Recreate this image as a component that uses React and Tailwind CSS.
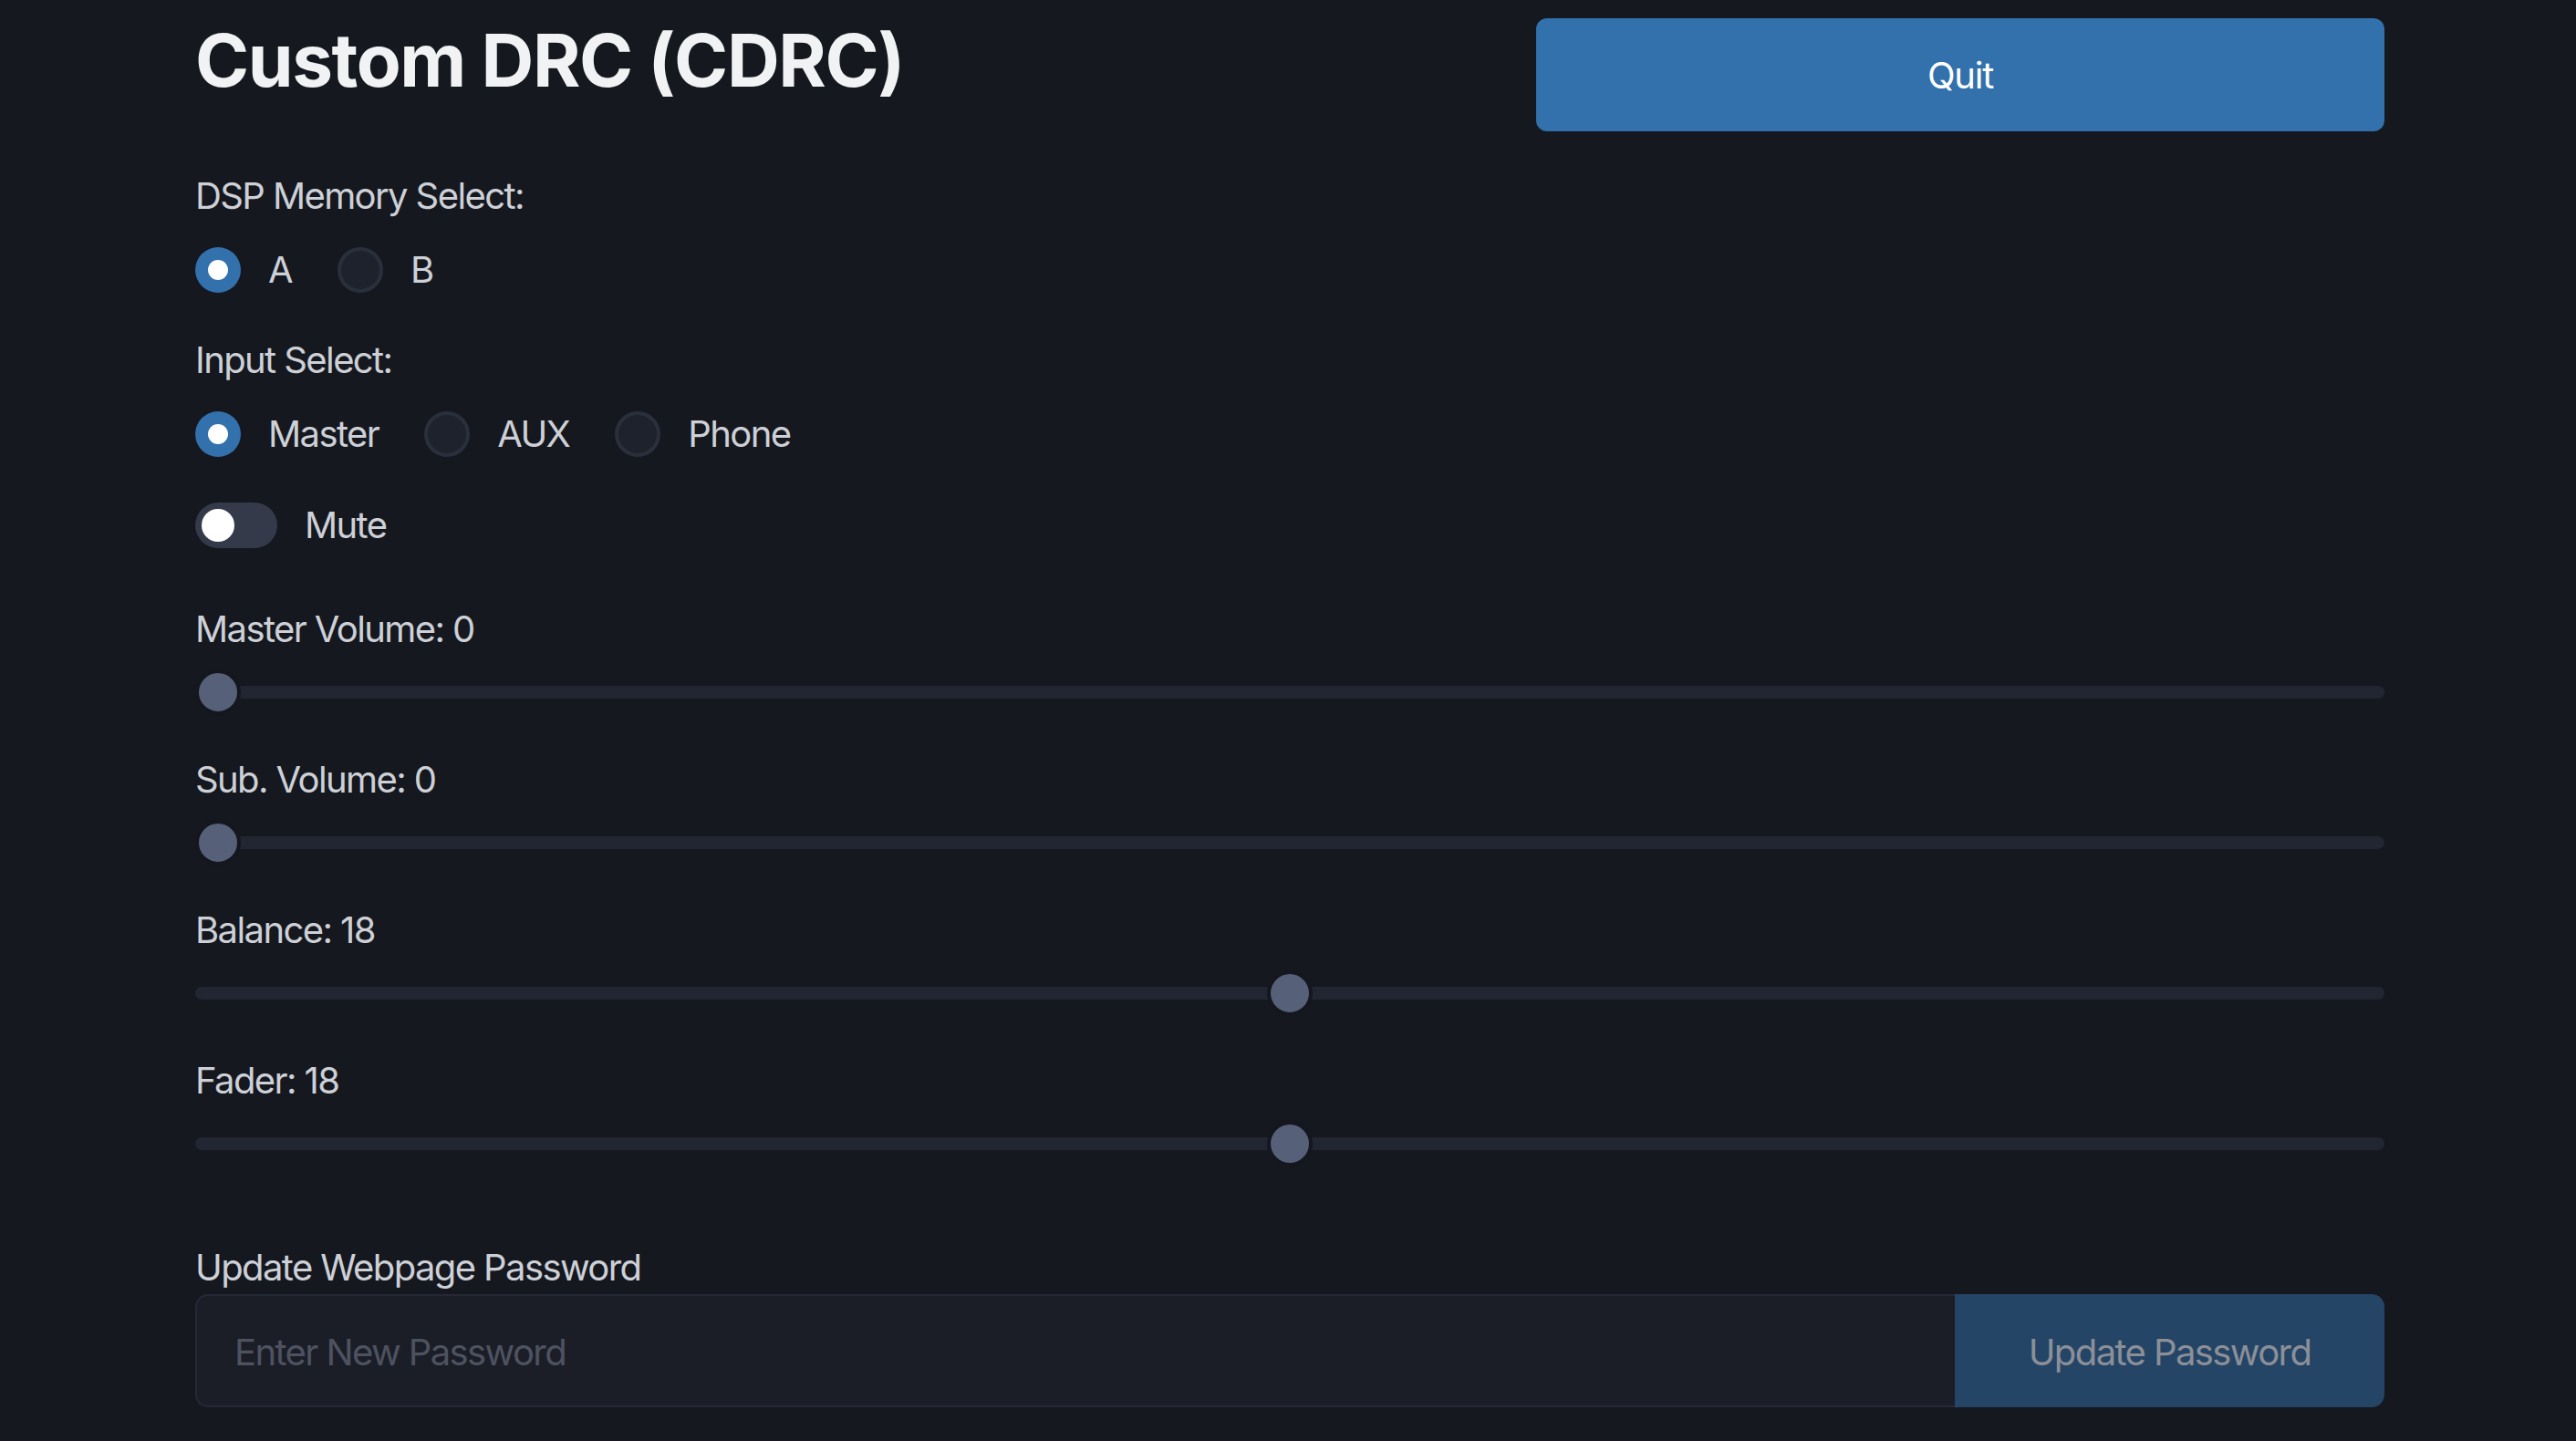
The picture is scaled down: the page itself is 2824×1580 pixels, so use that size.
import React from "react";

function Radio({ checked, label }) {
  return (
    <div className="flex items-center gap-[30px]">
      {checked ? (
        <div className="flex h-[50px] w-[50px] items-center justify-center rounded-full bg-[#3271ac]">
          <div className="h-[22px] w-[22px] rounded-full bg-white" />
        </div>
      ) : (
        <div className="h-[50px] w-[50px] rounded-full border-[4px] border-[#2a2f3c] bg-[#1e222c]" />
      )}
      <span className="text-[40px] leading-[56px] tracking-[-1.6px] text-[#cdd0d6]">{label}</span>
    </div>
  );
}

function Slider({ label, value, min, max, first }) {
  const pct = (value - min) / (max - min);
  return (
    <div className={first ? "mt-[61px]" : "mt-[43px]"}>
      <div className="h-[56px] text-[40px] leading-[56px] tracking-[-1.6px] text-[#cdd0d6]">
        {label}: {value}
      </div>
      <div className="relative mt-[16px] h-[50px] w-full">
        <div className="absolute left-0 right-0 top-[18px] h-[14px] rounded-full bg-[#222632]" />
        <div
          className="absolute top-0 h-[50px] w-[50px] rounded-full border-[4px] border-[#14171e] bg-[#576079]"
          style={{ left: `calc(${pct} * (100% - 50px))` }}
        />
      </div>
    </div>
  );
}

export default function App() {
  return (
    <div
      className="min-h-[1580px] w-full bg-[#15181f]"
      style={{ fontFamily: "Inter, 'Noto Sans', sans-serif" }}
    >
      <div className="ml-[214px] w-[2400px] pt-[20px]">
        <div className="flex items-start justify-between">
          <h1 className="text-[80px] font-bold leading-[92px] tracking-[-1.4px] text-[#f1f2f4]">
            Custom DRC (CDRC)
          </h1>
          <button className="h-[124px] w-[930px] rounded-[12px] bg-[#3271ab] pt-[2px] text-[40px] tracking-[-1.2px] text-white">
            Quit
          </button>
        </div>

        <div className="mt-[43px] h-[56px] text-[40px] leading-[56px] tracking-[-1.6px] text-[#cdd0d6]">
          DSP Memory Select:
        </div>
        <div className="mt-[28px] flex h-[50px] items-center gap-[50px]">
          <Radio checked label="A" />
          <Radio label="B" />
        </div>

        <div className="mt-[46px] h-[56px] text-[40px] leading-[56px] tracking-[-1.6px] text-[#cdd0d6]">
          Input Select:
        </div>
        <div className="mt-[28px] flex h-[50px] items-center gap-[50px]">
          <Radio checked label="Master" />
          <Radio label="AUX" />
          <Radio label="Phone" />
        </div>

        <div className="mt-[50px] flex h-[50px] items-center gap-[30px]">
          <div className="relative h-[50px] w-[90px] rounded-full bg-[#343a4a]">
            <div className="absolute left-[7px] top-[7px] h-[36px] w-[36px] rounded-full bg-white" />
          </div>
          <span className="text-[40px] leading-[56px] tracking-[-1.6px] text-[#cdd0d6]">Mute</span>
        </div>

        <Slider first label="Master Volume" value={0} min={0} max={36} />
        <Slider label="Sub. Volume" value={0} min={0} max={36} />
        <Slider label="Balance" value={18} min={0} max={36} />
        <Slider label="Fader" value={18} min={0} max={36} />

        <div className="mt-[83px] h-[56px] text-[40px] leading-[56px] tracking-[-1.6px] text-[#cdd0d6]">
          Update Webpage Password
        </div>
        <div className="mt-[1px] flex h-[124px]">
          <div className="flex flex-1 items-center rounded-l-[14px] border-[2px] border-r-0 border-[#252935] bg-[#1b1e27] px-[41px] pt-[4px]">
            <span className="text-[40px] tracking-[-1.6px] text-[#4e5260]">Enter New Password</span>
          </div>
          <button className="w-[471px] rounded-r-[14px] bg-[#244566] pt-[4px] text-[40px] tracking-[-1.6px] text-[#8b8f98]">
            Update Password
          </button>
        </div>
      </div>
    </div>
  );
}
